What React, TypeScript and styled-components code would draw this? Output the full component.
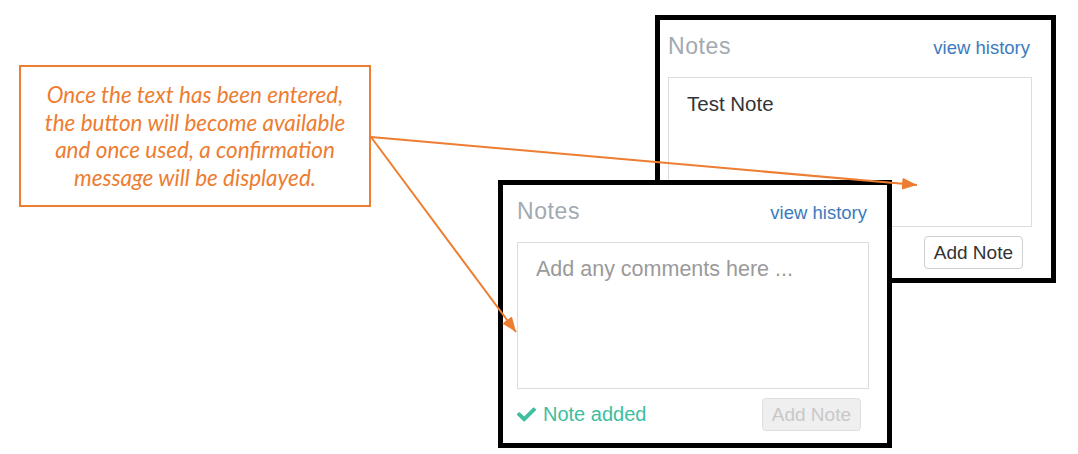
import styled, { createGlobalStyle } from 'styled-components';
import { FaCheck } from 'react-icons/fa';

const orange = '#ed7d31';

const GlobalStyle = createGlobalStyle`
  body {
    margin: 0;
    background: #fff;
    font-family: "Liberation Sans", Arial, sans-serif;
  }
`;

const Canvas = styled.div`
  position: relative;
  width: 1078px;
  height: 454px;
  overflow: hidden;
  background: #fff;
`;

const Callout = styled.div`
  position: absolute;
  left: 19px;
  top: 65px;
  width: 352px;
  height: 142px;
  box-sizing: border-box;
  border: 2px solid ${orange};
  display: flex;
  align-items: center;
  justify-content: center;
  color: ${orange};
  font-family: Lato, "Open Sans", sans-serif;
  font-style: italic;
  font-size: 22.5px;
  line-height: 27.5px;
  text-align: center;
`;

const CalloutText = styled.p`
  margin: 0;
`;

const Panel = styled.div<{ $left: number; $top: number; $width: number; $padL: number; $padR: number }>`
  position: absolute;
  left: ${(p) => p.$left}px;
  top: ${(p) => p.$top}px;
  width: ${(p) => p.$width}px;
  height: 268px;
  box-sizing: border-box;
  border: 5px solid #000;
  background: #fff;
  padding: 13px ${(p) => p.$padR}px 9px ${(p) => p.$padL}px;
  display: flex;
  flex-direction: column;
`;

const Header = styled.div`
  display: flex;
  justify-content: space-between;
  align-items: baseline;
  height: 30px;
  padding-right: 2px;
`;

const Title = styled.span`
  font-size: 23px;
  letter-spacing: 0.6px;
  color: #a2a9b0;
`;

const HistoryLink = styled.a`
  font-size: 18.5px;
  color: #3b7bbd;
  text-decoration: none;
`;

const NoteArea = styled.textarea<{ $height: number }>`
  margin-top: 14px;
  height: ${(p) => p.$height}px;
  box-sizing: border-box;
  border: 1px solid #dcdcdc;
  padding: 14px 18px;
  resize: none;
  outline: none;
  font-family: "Liberation Sans", Arial, sans-serif;
  font-size: 20.5px;
  line-height: 24px;
  color: #333;

  &::placeholder {
    color: #9a9a9a;
    font-size: 21.5px;
  }
`;

const Footer = styled.div`
  margin-top: 9px;
  display: flex;
  align-items: center;
  justify-content: space-between;
`;

const Status = styled.span`
  display: flex;
  align-items: center;
  gap: 7px;
  font-size: 20px;
  color: #3dbe9f;
`;

const AddButton = styled.button`
  margin-left: auto;
  margin-right: 9px;
  height: 33px;
  padding: 0 9px;
  box-sizing: border-box;
  border: 1px solid #cfcfcf;
  border-radius: 4px;
  background: #fff;
  font-family: "Liberation Sans", Arial, sans-serif;
  font-size: 19px;
  color: #333;

  &:disabled {
    margin-right: 8px;
    background: #efefef;
    border-color: #dedede;
    color: #c8c8c8;
  }
`;

const Arrows = styled.svg`
  position: absolute;
  left: 0;
  top: 0;
  pointer-events: none;
`;

export default function App() {
  return (
    <Canvas>
      <GlobalStyle />
      <Callout>
        <CalloutText>
          Once the text has been entered,
          <br />
          the button will become available
          <br />
          and once used, a confirmation
          <br />
          message will be displayed.
        </CalloutText>
      </Callout>

      <Panel $left={655} $top={15} $width={401} $padL={8} $padR={19}>
        <Header>
          <Title>Notes</Title>
          <HistoryLink href="#">view history</HistoryLink>
        </Header>
        <NoteArea $height={150} defaultValue="Test Note" />
        <Footer>
          <AddButton>Add Note</AddButton>
        </Footer>
      </Panel>

      <Panel $left={498} $top={180} $width={394} $padL={14} $padR={18}>
        <Header>
          <Title>Notes</Title>
          <HistoryLink href="#">view history</HistoryLink>
        </Header>
        <NoteArea $height={147} placeholder="Add any comments here ..." />
        <Footer>
          <Status>
            <FaCheck size={19} />
            Note added
          </Status>
          <AddButton disabled>Add Note</AddButton>
        </Footer>
      </Panel>

      <Arrows width={1078} height={454}>
        <defs>
          <marker
            id="head"
            markerUnits="userSpaceOnUse"
            markerWidth={15}
            markerHeight={12}
            refX={15}
            refY={6}
            orient="auto"
          >
            <path d="M0,0 L15,6 L0,12 z" fill={orange} />
          </marker>
        </defs>
        <line x1={371} y1={137} x2={917} y2={185} stroke={orange} strokeWidth={2} markerEnd="url(#head)" />
        <line x1={371} y1={137} x2={516} y2={332} stroke={orange} strokeWidth={2} markerEnd="url(#head)" />
      </Arrows>
    </Canvas>
  );
}
